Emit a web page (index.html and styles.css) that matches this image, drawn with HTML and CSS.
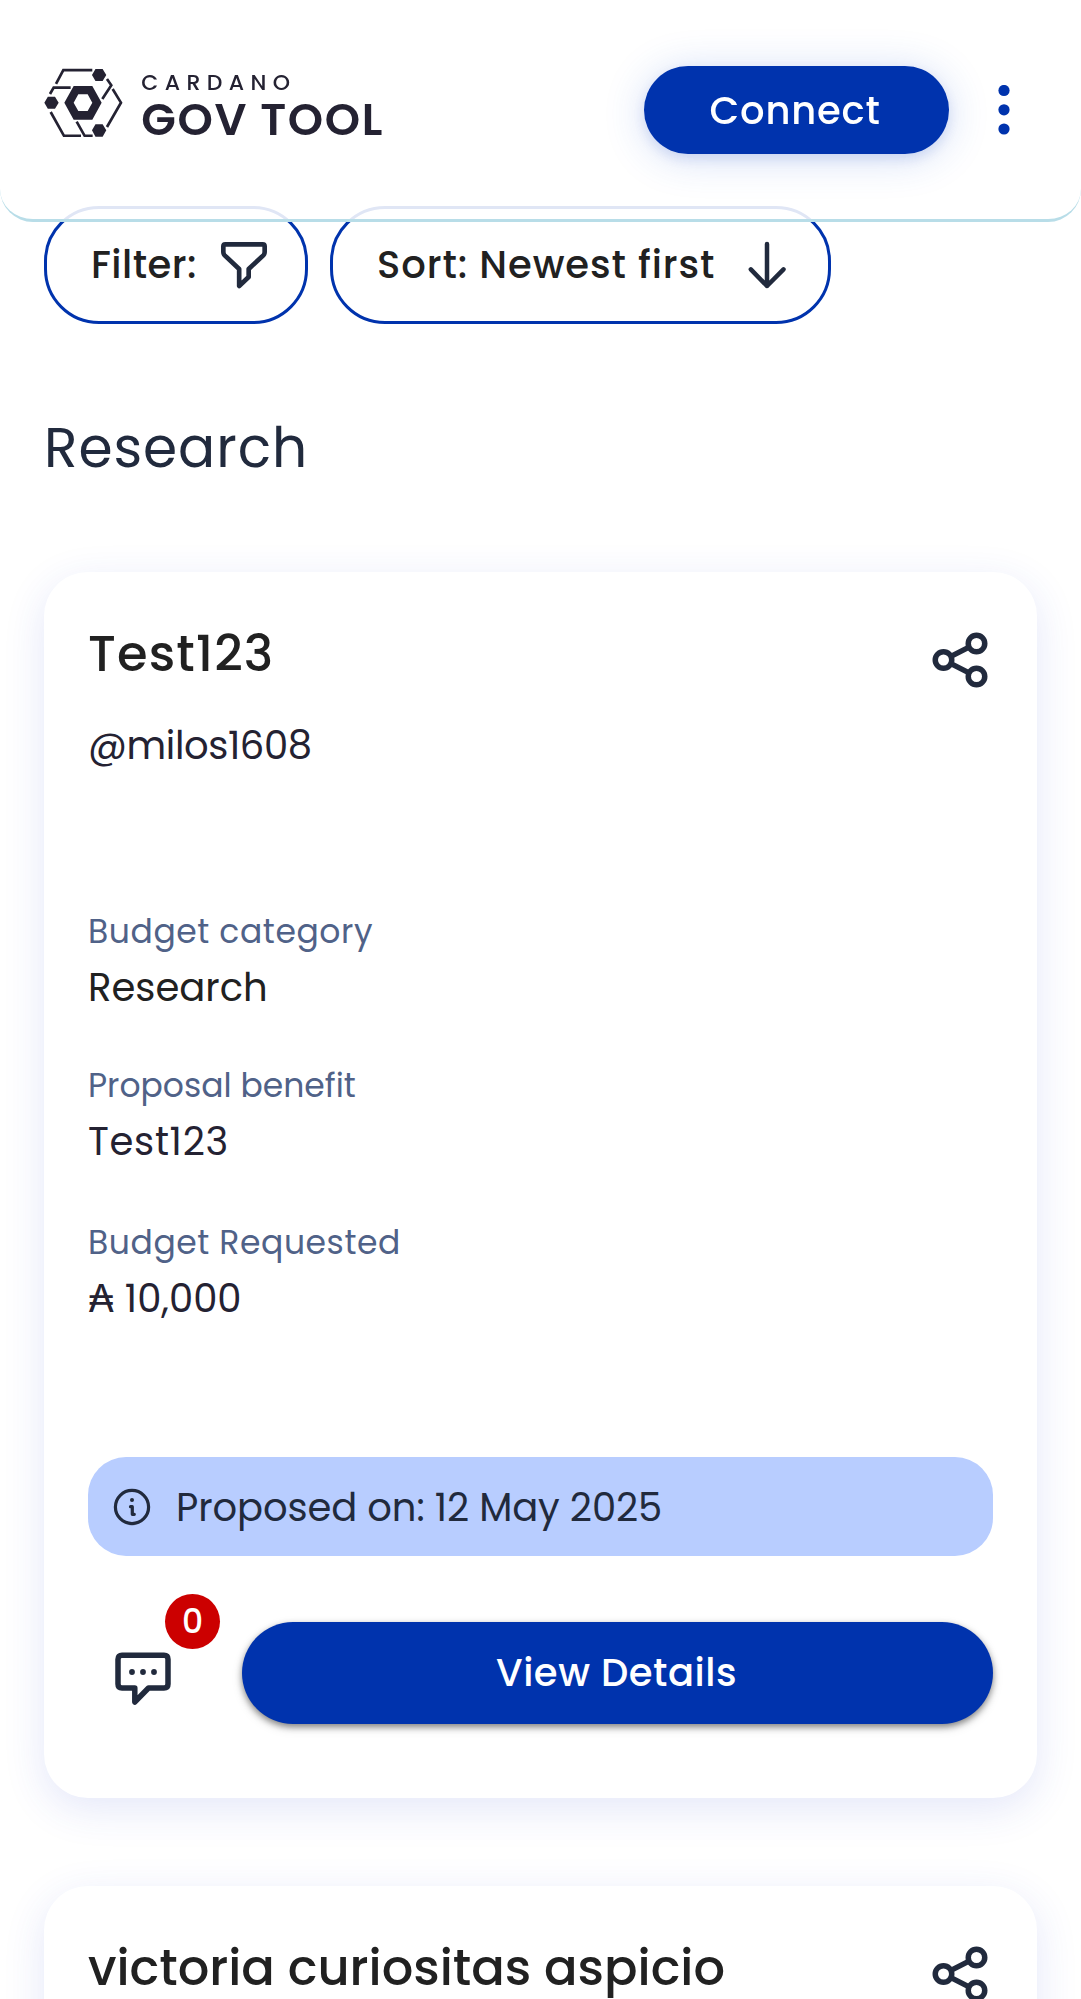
FILE: index.html
```html
<!DOCTYPE html>
<html lang="en">
<head>
<meta charset="utf-8">
<title>Cardano GovTool</title>
<link rel="stylesheet" href="styles.css">
</head>
<body>
<header class="topbar">
  <a class="brand">
    <svg class="brand-mark" viewBox="132 114 238 208" fill="none" stroke="#242232" stroke-width="8">
      <path d="M168 162 190 120.500H277M321 147 334 166 307 207M338 177 363 218 321 291M150 192 161 173H212M152 246 192 317.500H243M230 275 254 317.500H278"/>
      <path fill="#242232" stroke="none" fill-rule="evenodd" d="M193 218 221 168H277L305 218 277 269H221ZM221 218 235 243H263L277 218 263 193H235Z"/>
      <path fill="#242232" stroke="none" d="M276 135 286.500 117H308L319 135 308 153H286.500ZM133 218 143.500 200H165L176 218 165 236H143.500ZM276 301 286.500 283H308L319 301 308 320H286.500Z"/>
    </svg>
    <span class="brand-text">
      <span class="brand-top">CARDANO</span>
      <span class="brand-bottom">GOV TOOL</span>
    </span>
  </a>
  <div class="topbar-actions">
    <button class="connect">Connect</button>
    <svg class="dots" viewBox="0 0 12 50" fill="#0033ad"><circle cx="6" cy="5.500" r="5.600"/><circle cx="6" cy="24.800" r="5.600"/><circle cx="6" cy="44" r="5.600"/></svg>
  </div>
</header>
<main class="page">
  <div class="chips">
    <button class="chip chip-filter">
      <span class="filter-text">Filter:</span>
      <svg class="chip-icon" viewBox="660 154 150 150" fill="none" stroke="#212a3d" stroke-width="14" stroke-linejoin="round"><path d="M679 167H791Q797 167 797 173V190Q797 196 793 200L749 241V265L720.500 292V241L677 200Q673 196 673 190V173Q673 167 679 167Z"/></svg>
    </button>
    <button class="chip chip-sort">
      <span class="sort-text">Sort: Newest first</span>
      <svg class="chip-icon" viewBox="906 154 150 150" fill="none" stroke="#212a3d" stroke-width="13.500" stroke-linecap="round" stroke-linejoin="round"><path d="M981 166V292M932.500 242 981 292 1030.500 242"/></svg>
    </button>
  </div>
  <h2 class="section-title">Research</h2>
  <article class="card">
    <div class="card-head">
      <h3 class="card-title first">Test123</h3>
      <svg class="share" viewBox="0 0 24 24" fill="none" stroke="#212a3d" stroke-width="2"><circle cx="18" cy="6" r="3"/><circle cx="6" cy="12" r="3"/><circle cx="18" cy="18" r="3"/><path d="m8.700 10.700 6.600-3.400M8.700 13.300l6.600 3.400"/></svg>
    </div>
    <p class="handle">@milos1608</p>
    <dl class="facts">
      <div class="fact"><dt class="wide">Budget category</dt><dd class="neutral">Research</dd></div>
      <div class="fact"><dt>Proposal benefit</dt><dd class="benefit">Test123</dd></div>
      <div class="fact"><dt class="wide">Budget Requested</dt><dd>₳ 10,000</dd></div>
    </dl>
    <div class="notice">
      <svg class="info" viewBox="0 0 38 38" fill="none" stroke="#212a3d" stroke-width="3.200" stroke-linecap="round" stroke-linejoin="round"><circle cx="19" cy="19" r="16.600"/><path d="M17.500 18.700H19.300V26.300H21.300"/><circle cx="19" cy="12" r="2" fill="#212a3d" stroke="none"/></svg>
      <span class="notice-text">Proposed on: 12 May 2025</span>
    </div>
    <div class="actions">
      <div class="comments">
        <svg class="comment-icon" viewBox="0 0 56 54" fill="none" stroke="#212a3d" stroke-width="5.500" stroke-linejoin="round"><path d="M7 3.200H49Q53 3.200 53 7.200V32Q53 36 49 36H33.500L19.800 50V36H7Q3 36 3 32V7.200Q3 3.200 7 3.200Z"/><g fill="#212a3d" stroke="none"><circle cx="17" cy="20" r="2.900"/><circle cx="28" cy="20" r="2.900"/><circle cx="39" cy="20" r="2.900"/></g></svg>
        <span class="badge">0</span>
      </div>
      <button class="details">View Details</button>
    </div>
  </article>
  <article class="card">
    <div class="card-head">
      <h3 class="card-title">victoria curiositas aspicio</h3>
      <svg class="share" viewBox="0 0 24 24" fill="none" stroke="#212a3d" stroke-width="2"><circle cx="18" cy="6" r="3"/><circle cx="6" cy="12" r="3"/><circle cx="18" cy="18" r="3"/><path d="m8.700 10.700 6.600-3.400M8.700 13.300l6.600 3.400"/></svg>
    </div>
  </article>
</main>
</body>
</html>
```
FILE: styles.css
```css
* { box-sizing: border-box; margin: 0; padding: 0; }

body {
  width: 1081px;
  background: #fff;
  color: #212121;
  font-family: Poppins, Inter, "Noto Sans", sans-serif;
  font-size: 38.5px;
}

button { font: inherit; border: 0; color: inherit; background: none; }
svg { display: block; flex: none; }

.topbar {
  position: fixed;
  top: 0;
  left: 0;
  z-index: 2;
  width: 1081px;
  height: 222px;
  padding: 66px 71px 0 44px;
  display: flex;
  justify-content: space-between;
  align-items: flex-start;
  background: rgba(255, 255, 255, .88);
  border-bottom: 3px solid #b8dde8;
  border-radius: 0 0 33px 33px;
}
.brand { display: flex; gap: 18px; padding-top: 2px; color: #242232; }
.brand-mark { width: 79.3px; height: 69.3px; }
.brand-text { display: flex; flex-direction: column; }
.brand-top { font-size: 22px; line-height: 24px; font-weight: 500; letter-spacing: 6.4px; margin-top: 3px; }
.brand-bottom { font-size: 45px; line-height: 40px; font-weight: 600; letter-spacing: 1.6px; margin-top: 5px; }

.topbar-actions { display: flex; align-items: center; gap: 49px; }
.connect {
  width: 305px;
  height: 88px;
  padding-right: 3px;
  border-radius: 44px;
  background: #0033ad;
  color: #fff;
  font-weight: 500;
  letter-spacing: .8px;
  box-shadow: 0 4px 40px rgba(47, 98, 220, .22), 0 5px 12px rgba(0, 51, 173, .12);
}
.dots { width: 12px; height: 50px; }

.page { height: 1999px; overflow: hidden; padding: 206px 44px 0; }
.chips { display: flex; gap: 22px; }
.chip {
  height: 118px;
  padding: 0 36px 0 44px;
  display: flex;
  align-items: center;
  justify-content: space-between;
  border: 3px solid #0033ad;
  border-radius: 55px;
  font-weight: 500;
}
.chip span { padding-bottom: 2px; }
.chip-filter { width: 264px; letter-spacing: .5px; }
.chip-sort { width: 501px; letter-spacing: .97px; }
.chip-icon { width: 50px; height: 50px; }

.section-title {
  margin: 82px 0 83px;
  font-size: 55px;
  line-height: 83px;
  font-weight: 400;
  letter-spacing: .94px;
  color: #212a3d;
}

.card {
  margin-bottom: 88px;
  padding: 44px 44px 74px;
  border-radius: 44px;
  background: #fff;
  box-shadow: 0 11px 41px rgba(47, 66, 210, .13);
}
.card-head { display: flex; justify-content: space-between; align-items: flex-start; }
.card-title { font-size: 49.5px; line-height: 76px; font-weight: 500; }
.card-title.first { letter-spacing: 1.1px; }
.share { width: 66px; height: 66px; margin-top: 11px; }
.handle { margin-top: 24px; line-height: 58px; letter-spacing: -.4px; color: #242232; }

.facts { margin-top: 132px; display: flex; flex-direction: column; gap: 44px; }
.fact:last-child { padding-top: 3px; }
dt { font-size: 33px; line-height: 50px; color: #506288; }
dt.wide { letter-spacing: .58px; }
dd { margin-top: 2px; line-height: 58px; color: #242232; }
dd.neutral { color: #212121; }
dd.benefit { letter-spacing: .7px; }

.notice {
  margin-top: 129px;
  height: 99px;
  padding: 0 25px;
  display: flex;
  align-items: center;
  gap: 25px;
  border-radius: 38px;
  background: #b8cdff;
  color: #212a3d;
}
.notice-text { letter-spacing: -.1px; padding-top: 1px; }
.info { width: 38px; height: 38px; }

.actions { margin-top: 66px; display: flex; gap: 71px; padding-left: 27px; }
.comments { position: relative; width: 56px; padding-top: 30px; }
.comment-icon { width: 56px; height: 54px; }
.badge {
  position: absolute;
  left: 50px;
  top: -28px;
  width: 55px;
  height: 55px;
  border-radius: 50%;
  background: #c00;
  color: #fff;
  font-size: 33px;
  line-height: 55px;
  font-weight: 500;
  text-align: center;
}
.details {
  flex: 1;
  height: 102px;
  padding: 0 2px 2px 0;
  border-radius: 51px;
  background: #0033ad;
  color: #fff;
  font-weight: 500;
  letter-spacing: .53px;
  box-shadow: 0 3px 6px rgba(0, 0, 0, .42), 0 4px 12px rgba(0, 0, 0, .12);
}
```
